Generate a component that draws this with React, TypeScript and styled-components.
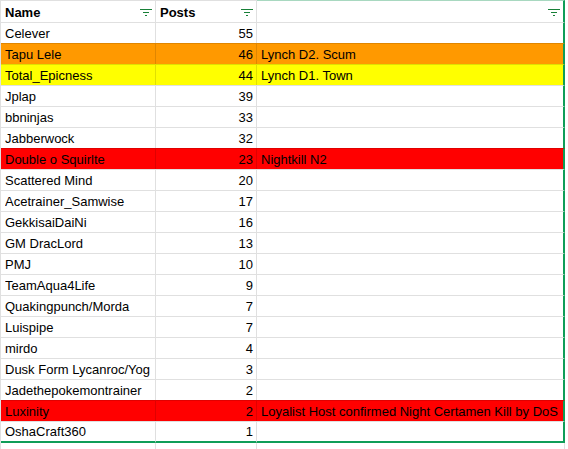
import React from "react";
import styled, { createGlobalStyle, css } from "styled-components";

const Global = createGlobalStyle`
  html, body { margin: 0; padding: 0; background: #ffffff; overflow: hidden; }
  body { font-family: "Liberation Sans", Arial, sans-serif; font-size: 13px; color: #000; }
`;

const GRID = "rgba(0,0,0,0.12)";
const GREEN = "#0f9d58";

type Fill = "none" | "orange" | "yellow" | "red";
const fills: Record<Fill, string> = {
  none: "#ffffff",
  orange: "#ff9900",
  yellow: "#ffff00",
  red: "#ff0000",
};

const Sheet = styled.div`
  display: grid;
  grid-template-columns: 155px 101px 308px 4px;
  border-left: 1px solid #e0e0e0;
  width: max-content;
`;

const Cell = styled.div<{
  $fill?: Fill;
  $align?: "left" | "right";
  $header?: boolean;
  $last?: boolean;
  $edge?: boolean;
  $topAccent?: boolean;
}>`
  box-sizing: border-box;
  height: ${(p) => (p.$header ? 22 : 21)}px;
  display: flex;
  align-items: flex-end;
  justify-content: ${(p) => (p.$align === "right" ? "flex-end" : "flex-start")};
  padding: 0 3px 1px 4px;
  background: ${(p) => fills[p.$fill || "none"]};
  border-top: 1px solid ${(p) => (p.$topAccent ? "#a8d8c0" : GRID)};
  border-right: ${(p) => (p.$edge ? `2px solid ${GREEN}` : `1px solid ${GRID}`)};
  overflow: hidden;
  white-space: nowrap;
  line-height: 16px;
  font-weight: ${(p) => (p.$header ? 700 : 400)};
  ${(p) =>
    p.$last &&
    css`
      border-bottom: 2px solid ${GREEN};
      height: 22px;
    `}
`;

const Spacer = styled.div<{ $header?: boolean }>`
  height: ${(p) => (p.$header ? 22 : 21)}px;
`;

const FillerCell = styled.div<{ $edge?: boolean }>`
  box-sizing: border-box;
  height: 21px;
  border-right: 1px solid ${GRID};
`;

const Label = styled.span`
  flex: 1 1 auto;
  overflow: hidden;
`;

const FilterIcon = styled.svg`
  flex: 0 0 auto;
  align-self: flex-end;
  margin-bottom: 5px;
  margin-left: 2px;
  margin-right: 0px;
`;

const Filter = () => (
  <FilterIcon width="12" height="7" viewBox="0 0 12 7">
    <path d="M0 0.5H12M3 3.5H9M5 6.5H7" stroke="#188038" strokeWidth="1" fill="none" />
  </FilterIcon>
);

type Row = { name: string; posts: number; note?: string; fill?: Fill };

const rows: Row[] = [
  { name: "Celever", posts: 55 },
  { name: "Tapu Lele", posts: 46, note: "Lynch D2. Scum", fill: "orange" },
  { name: "Total_Epicness", posts: 44, note: "Lynch D1. Town", fill: "yellow" },
  { name: "Jplap", posts: 39 },
  { name: "bbninjas", posts: 33 },
  { name: "Jabberwock", posts: 32 },
  { name: "Double o Squirlte", posts: 23, note: "Nightkill N2", fill: "red" },
  { name: "Scattered Mind", posts: 20 },
  { name: "Acetrainer_Samwise", posts: 17 },
  { name: "GekkisaiDaiNi", posts: 16 },
  { name: "GM DracLord", posts: 13 },
  { name: "PMJ", posts: 10 },
  { name: "TeamAqua4Life", posts: 9 },
  { name: "Quakingpunch/Morda", posts: 7 },
  { name: "Luispipe", posts: 7 },
  { name: "mirdo", posts: 4 },
  { name: "Dusk Form Lycanroc/Yog", posts: 3 },
  { name: "Jadethepokemontrainer", posts: 2 },
  {
    name: "Luxinity",
    posts: 2,
    note: "Loyalist Host confirmed Night Certamen Kill by DoS",
    fill: "red",
  },
  { name: "OshaCraft360", posts: 1 },
];

export default function App() {
  return (
    <>
      <Global />
      <Sheet>
        <Cell $header>
          <Label>Name</Label>
          <Filter />
        </Cell>
        <Cell $header>
          <Label>Posts</Label>
          <Filter />
        </Cell>
        <Cell $header $edge $topAccent>
          <Label />
          <Filter />
        </Cell>
        <Spacer $header />
        {rows.map((r, i) => {
          const last = i === rows.length - 1;
          return (
            <React.Fragment key={r.name}>
              <Cell $fill={r.fill} $last={last}>
                <Label>{r.name}</Label>
              </Cell>
              <Cell $fill={r.fill} $align="right" $last={last}>
                {r.posts}
              </Cell>
              <Cell $fill={r.fill} $last={last} $edge>
                <Label>{r.note || ""}</Label>
              </Cell>
              <Spacer />
            </React.Fragment>
          );
        })}
        <FillerCell />
        <FillerCell />
        <FillerCell />
        <FillerCell />
      </Sheet>
    </>
  );
}
